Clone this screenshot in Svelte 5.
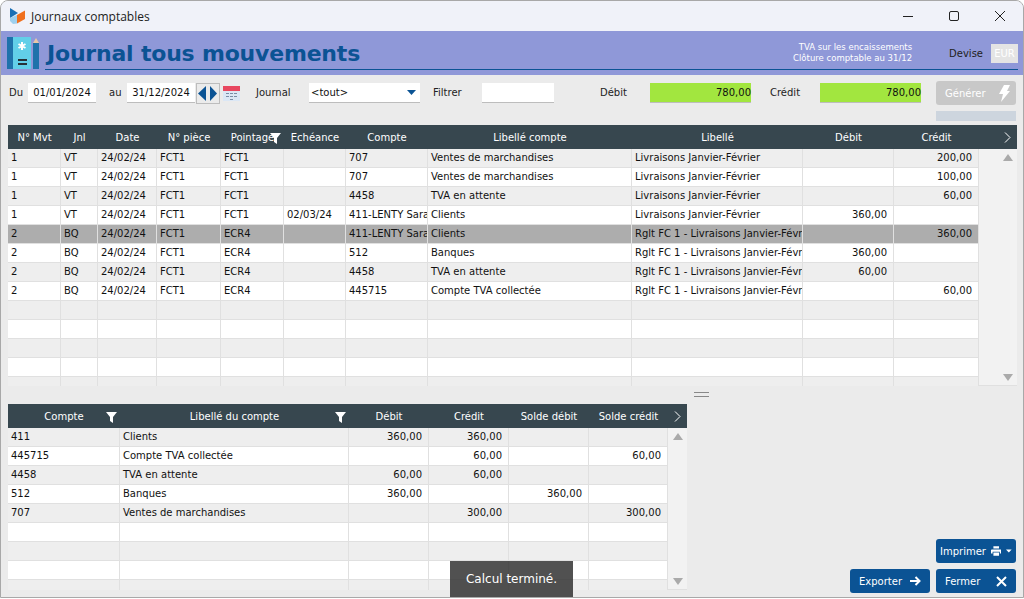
<script>
  const topCols = ['N° Mvt', 'Jnl', 'Date', 'N° pièce', 'Pointage', 'Echéance', 'Compte', 'Libellé compte', 'Libellé', 'Débit', 'Crédit'];

  const mouvements = [
    ['1', 'VT', '24/02/24', 'FCT1', 'FCT1', '', '707', 'Ventes de marchandises', 'Livraisons Janvier-Février', '', '200,00'],
    ['1', 'VT', '24/02/24', 'FCT1', 'FCT1', '', '707', 'Ventes de marchandises', 'Livraisons Janvier-Février', '', '100,00'],
    ['1', 'VT', '24/02/24', 'FCT1', 'FCT1', '', '4458', 'TVA en attente', 'Livraisons Janvier-Février', '', '60,00'],
    ['1', 'VT', '24/02/24', 'FCT1', 'FCT1', '02/03/24', '411-LENTY Sarah', 'Clients', 'Livraisons Janvier-Février', '360,00', ''],
    ['2', 'BQ', '24/02/24', 'FCT1', 'ECR4', '', '411-LENTY Sarah', 'Clients', 'Rglt FC 1 - Livraisons Janvier-Février', '', '360,00'],
    ['2', 'BQ', '24/02/24', 'FCT1', 'ECR4', '', '512', 'Banques', 'Rglt FC 1 - Livraisons Janvier-Février', '360,00', ''],
    ['2', 'BQ', '24/02/24', 'FCT1', 'ECR4', '', '4458', 'TVA en attente', 'Rglt FC 1 - Livraisons Janvier-Février', '60,00', ''],
    ['2', 'BQ', '24/02/24', 'FCT1', 'ECR4', '', '445715', 'Compte TVA collectée', 'Rglt FC 1 - Livraisons Janvier-Février', '', '60,00'],
    ...Array(5).fill(Array(11).fill(''))
  ];

  const botCols = ['Compte', 'Libellé du compte', 'Débit', 'Crédit', 'Solde débit', 'Solde crédit'];

  const comptes = [
    ['411', 'Clients', '360,00', '360,00', '', ''],
    ['445715', 'Compte TVA collectée', '', '60,00', '', '60,00'],
    ['4458', 'TVA en attente', '60,00', '60,00', '', ''],
    ['512', 'Banques', '360,00', '', '360,00', ''],
    ['707', 'Ventes de marchandises', '', '300,00', '', '300,00'],
    ...Array(4).fill(Array(6).fill(''))
  ];
</script>

{#snippet funnel()}
  <svg class="funnel" width="11" height="11" viewBox="0 0 11 11"><path d="M0 0h11L7 5v6L4 9V5z" fill="#fff" /></svg>
{/snippet}

{#snippet chevron()}
  <svg width="7" height="11" viewBox="0 0 7 11"><path d="M1 .5 6 5.500 1 10.500" fill="none" stroke="#fff" /></svg>
{/snippet}

<div class="window">
  <div class="titlebar">
    <svg class="app-icon" width="18" height="18" viewBox="0 0 18 18">
      <path d="M1 1 9 6 1 11z" fill="#1a6fb5" />
      <path d="M8 8 16 3.500V12L8 16.500z" fill="#f0701e" />
      <path d="M1 11 8 8v8.500L4 17 1 14z" fill="#9fd0ee" />
    </svg>
    <span class="app-title">Journaux comptables</span>
    <div class="win-btns">
      <svg width="12" height="12" viewBox="0 0 12 12"><path d="M1 6.500h10" stroke="#222" /></svg>
      <svg width="12" height="12" viewBox="0 0 12 12"><rect x="1.500" y="1.500" width="9" height="9" rx="1.500" fill="none" stroke="#222" /></svg>
      <svg width="12" height="12" viewBox="0 0 12 12"><path d="M1 1l10 10M11 1 1 11" stroke="#222" /></svg>
    </div>
  </div>

  <header class="banner">
    <svg class="book" width="33" height="33" viewBox="0 0 33 33">
      <rect x="0" y="0" width="6" height="32" fill="#1f72ab" />
      <rect x="6" y="0" width="18" height="32" fill="#62cfe8" />
      <path d="M15 5v8M11.500 7l7 4M18.500 7l-7 4" stroke="#fff" stroke-width="2" />
      <path d="M11 23h9M11 27h9" stroke="#263238" stroke-width="2" />
      <rect x="26" y="6" width="6" height="26" fill="#1f72ab" />
      <path d="M26 6l3-5 3 5z" fill="#e8c8a8" />
    </svg>
    <div class="banner-line">
      <h1>Journal tous mouvements</h1>
      <div class="notes">TVA sur les encaissements<br />Clôture comptable au 31/12</div>
      <span class="devise">Devise</span>
      <span class="eur">EUR</span>
    </div>
  </header>

  <div class="filters">
    <span class="lbl du">Du</span>
    <span class="field date">01/01/2024</span>
    <span class="lbl au">au</span>
    <span class="field date">31/12/2024</span>
    <span class="nav">
      <svg width="11" height="17" viewBox="0 0 11 17"><path d="M9 1v15L1 8.500z" fill="#0b5394" /></svg>
      <svg width="11" height="17" viewBox="0 0 11 17"><path d="M2 1v15l7-7.500z" fill="#0b5394" /></svg>
    </span>
    <svg class="cal" width="17" height="15" viewBox="0 0 17 15">
      <rect y="0" width="17" height="15" fill="#dbe7f5" />
      <rect y="0" width="17" height="5" fill="#e8475f" />
      <path d="M3 7h3v1H3zM7 7h3v1H7zM11 7h3v1h-3zM3 10h3v1H3zM7 10h3v1H7zM11 10h3v1h-3zM7 13h3v1H7z" fill="#7a8ca5" />
    </svg>
    <span class="lbl journal">Journal</span>
    <span class="select"><span class="select-val">&lt;tout&gt;</span><svg width="9" height="5" viewBox="0 0 9 5"><path d="M0 0h9L4.500 5z" fill="#0b5394" /></svg></span>
    <span class="lbl filtrer">Filtrer</span>
    <span class="field filtre"></span>
    <span class="lbl debit">Débit</span>
    <span class="total">780,00</span>
    <span class="lbl credit">Crédit</span>
    <span class="total">780,00</span>
    <div class="gen">
      <span class="gen-btn">Générer
        <svg width="11" height="17" viewBox="0 0 11 17"><path d="M5 0h6L8 6h3L2 17l2-8H0z" fill="#fff" /></svg>
      </span>
      <span class="gen-bar"></span>
    </div>
  </div>

  <section class="grid grid-top">
    <div class="head">
      {#each topCols as col}
        <span class="th">{col}{#if col === 'Pointage'}{@render funnel()}{/if}</span>
      {/each}
      <span class="more">{@render chevron()}</span>
    </div>
    <div class="body">
      <div class="rows">
        {#each mouvements as row, i}
          <div class="tr" class:alt={i % 2 === 0} class:sel={i === 4}>
            {#each row as cell, c}
              <span class="td" class:num={c > 8}>{cell}</span>
            {/each}
          </div>
        {/each}
      </div>
      <div class="scroll">
        <svg width="10" height="7" viewBox="0 0 10 7"><path d="M5 0l5 7H0z" fill="#aaa" /></svg>
        <svg width="10" height="7" viewBox="0 0 10 7"><path d="M0 0h10L5 7z" fill="#aaa" /></svg>
      </div>
    </div>
  </section>

  <div class="splitter"></div>

  <div class="lower">
    <section class="grid grid-bot">
      <div class="head">
        {#each botCols as col, c}
          <span class="th">{col}{#if c < 2}{@render funnel()}{/if}</span>
        {/each}
        <span class="more">{@render chevron()}</span>
      </div>
      <div class="body">
        <div class="rows">
          {#each comptes as row, i}
            <div class="tr" class:alt={i % 2 === 0}>
              {#each row as cell, c}
                <span class="td" class:num={c > 1}>{cell}</span>
              {/each}
            </div>
          {/each}
        </div>
        <div class="scroll">
          <svg width="10" height="7" viewBox="0 0 10 7"><path d="M5 0l5 7H0z" fill="#aaa" /></svg>
          <svg width="10" height="7" viewBox="0 0 10 7"><path d="M0 0h10L5 7z" fill="#aaa" /></svg>
        </div>
      </div>
    </section>

    <div class="actions">
      <button class="btn print">Imprimer
        <svg width="13" height="12" viewBox="0 0 13 12"><path d="M3 0h7v3H3zM1 4h11a1 1 0 0 1 1 1v4h-2V7H2v2H0V5a1 1 0 0 1 1-1zM3 8h7v4H3z" fill="#fff" /></svg>
        <svg class="caret" width="7" height="4" viewBox="0 0 7 4"><path d="M0 0h7L3.500 4z" fill="#fff" /></svg>
      </button>
      <div class="btn-row">
        <button class="btn">Exporter
          <svg width="11" height="10" viewBox="0 0 11 10"><path d="M0 5h9M5.500 1 9.500 5l-4 4" fill="none" stroke="#fff" stroke-width="2" /></svg>
        </button>
        <button class="btn">Fermer
          <svg width="11" height="11" viewBox="0 0 11 11"><path d="M1 1l9 9M10 1l-9 9" stroke="#fff" stroke-width="2" /></svg>
        </button>
      </div>
    </div>
  </div>

  <div class="toast">Calcul terminé.</div>
</div>

<style>
  :global(body) {
    margin: 0;
    background: #fff;
  }
  .window {
    position: relative;
    width: 1024px;
    height: 598px;
    box-sizing: border-box;
    border: 1px solid #a8a8a8;
    border-radius: 8px 8px 0 0;
    background: #ebebeb;
    overflow: hidden;
    display: flex;
    flex-direction: column;
    font-family: "DejaVu Sans", sans-serif;
    font-size: 10px;
    color: #111;
  }

  /* Title bar */
  .titlebar {
    height: 30px;
    flex: none;
    background: #f0f2f9;
    display: flex;
    align-items: center;
    padding-left: 8px;
  }
  .app-title {
    margin-left: 4px;
    font-family: "Open Sans", sans-serif;
    font-size: 12px;
    color: #222;
  }
  .win-btns {
    margin-left: auto;
    display: flex;
    gap: 34px;
    padding-right: 17px;
  }

  /* Banner */
  .banner {
    height: 44px;
    flex: none;
    background: #8f98d8;
    display: flex;
    align-items: flex-start;
    padding: 6px 5px 0 6px;
    box-sizing: border-box;
  }
  .banner-line {
    flex: 1;
    height: 32px;
    margin-left: 5px;
    border-bottom: 1px solid #0b5394;
    display: flex;
    align-items: center;
    padding-left: 2px;
  }
  h1 {
    margin: 0;
    font-size: 22px;
    font-weight: bold;
    color: #0b5394;
    letter-spacing: -0.2px;
  }
  .notes {
    margin-left: auto;
    text-align: right;
    font-size: 8.500px;
    line-height: 11px;
    color: #fff;
  }
  .devise {
    margin-left: 37px;
    font-size: 10px;
    color: #222;
  }
  .eur {
    margin-left: 8px;
    width: 27px;
    height: 19px;
    line-height: 19px;
    text-align: center;
    background: #e4e4e4;
    color: #fff;
    font-size: 10px;
  }

  /* Filter row */
  .filters {
    height: 50px;
    flex: none;
    display: flex;
    align-items: flex-start;
    padding: 8px 0 0 8px;
    box-sizing: border-box;
  }
  .lbl {
    line-height: 19px;
    margin-top: 0;
    color: #222;
  }
  .field,
  .select,
  .total {
    height: 19px;
    line-height: 19px;
    background: #fff;
    border-bottom: 1px solid #bdbdbd;
    box-sizing: content-box;
  }
  .date {
    width: 68px;
    text-align: center;
  }
  .du { width: 19px; }
  .au { width: 18px; margin-left: 13px; }
  .nav {
    margin-left: 1px;
    width: 22px;
    height: 19px;
    display: flex;
    align-items: center;
    justify-content: center;
    border: 1px solid #bdbdbd;
    box-sizing: content-box;
  }
  .nav svg {
    display: block;
  }
  .cal { margin: 3px 0 0 3px; }
  .journal { margin-left: 16px; width: 53px; }
  .select {
    width: 111px;
    display: flex;
    align-items: center;
    justify-content: space-between;
    padding-right: 0;
  }
  .select-val { padding-left: 2px; }
  .select svg { margin-right: 4px; }
  .filtrer { margin-left: 13px; width: 49px; }
  .filtre { width: 72px; }
  .debit { margin-left: 46px; width: 50px; }
  .credit { margin-left: 19px; width: 50px; }
  .total {
    width: 101px;
    background: #a2e63f;
    text-align: right;
    padding-right: 0;
  }
  .gen {
    margin: -2px 0 0 15px;
    width: 80px;
  }
  .gen-btn {
    height: 24px;
    border-radius: 3px;
    background: #c8c8c8;
    color: #fff;
    display: flex;
    align-items: center;
    justify-content: space-between;
    padding: 0 6px 0 9px;
    box-sizing: border-box;
  }
  .gen-bar {
    display: block;
    margin-top: 6px;
    height: 10px;
    background: #cdd5de;
  }

  /* Grids */
  .grid {
    flex: none;
    margin-left: 7px;
  }
  .grid-top {
    width: 1009px;
    --cols: 53px 37px 59px 64px 63px 62px 82px 204px 171px 91px 85px;
    --rows: 971px;
  }
  .grid-top .rows { width: 971px; height: 237px; }
  .grid-bot {
    width: 679px;
    --cols: 112px 229px 80px 80px 80px 79px;
    --rows: 660px;
  }
  .grid-bot .rows { width: 660px; height: 162px; }
  .head {
    height: 24px;
    background: #37474f;
    color: #fff;
    display: grid;
    grid-template-columns: var(--cols) 1fr;
    align-items: center;
  }
  .th {
    position: relative;
    text-align: center;
    white-space: nowrap;
  }
  .funnel {
    position: absolute;
    right: 3px;
    top: 1px;
  }
  .more {
    display: flex;
    justify-content: flex-end;
    padding-right: 6px;
  }
  .body {
    display: flex;
    overflow: hidden;
  }
  .rows {
    overflow: hidden;
    flex: none;
  }
  .tr {
    display: grid;
    grid-template-columns: var(--cols);
    height: 19px;
    background: #fff;
  }
  .tr.alt { background: #eee; }
  .tr.sel { background: #adadad; }
  .td {
    border-right: 1px solid #e0e0e0;
    border-bottom: 1px solid #e0e0e0;
    line-height: 18px;
    padding: 0 3px;
    box-sizing: border-box;
    white-space: nowrap;
    overflow: hidden;
  }
  .td.num {
    text-align: right;
    padding-right: 6px;
  }
  .scroll {
    flex: 1;
    display: flex;
    flex-direction: column;
    align-items: flex-end;
    justify-content: space-between;
    padding: 5px 4px 4px 0;
    box-sizing: border-box;
    background: #f2f2f2;
    border-bottom: 1px solid #e0e0e0;
  }

  .splitter {
    width: 15px;
    height: 3px;
    margin: 6px 0 7px 693px;
    border-top: 1px solid #888;
    border-bottom: 1px solid #888;
    flex: none;
  }

  /* Lower part */
  .lower {
    flex: 1;
    display: flex;
    min-height: 0;
  }
  .actions {
    flex: 1;
    display: flex;
    flex-direction: column;
    align-items: flex-end;
    justify-content: flex-end;
    gap: 6px;
    padding: 0 7px 4px 0;
  }
  .btn-row {
    display: flex;
    gap: 6px;
  }
  .btn {
    width: 80px;
    height: 24px;
    border: 0;
    border-radius: 3px;
    background: #0b5394;
    color: #fff;
    font: inherit;
    display: flex;
    align-items: center;
    justify-content: space-between;
    padding: 0 9px;
  }
  .print {
    padding: 0 4px;
    gap: 5px;
    justify-content: flex-start;
  }
  .caret { margin-left: auto; }

  .toast {
    position: absolute;
    left: 449px;
    bottom: 0;
    width: 123px;
    height: 36px;
    background: rgba(50, 50, 50, 0.85);
    color: #fff;
    font-size: 12px;
    line-height: 36px;
    text-align: center;
  }
</style>
